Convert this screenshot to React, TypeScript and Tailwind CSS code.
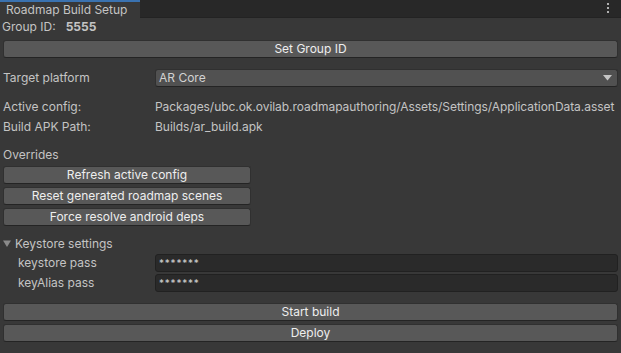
import React from "react";

const font = { fontFamily: "Inter, 'Noto Sans', sans-serif" };

function Btn({ children, className = "" }: { children: React.ReactNode; className?: string }) {
  return (
    <div
      className={
        "h-[18px] flex items-center justify-center rounded-[3px] bg-[#585858] border border-[#303030] border-b-[#242424] text-[#eeeeee] text-[12px] leading-none " +
        className
      }
    >
      {children}
    </div>
  );
}

function Field() {
  return (
    <div className="h-[18px] flex-1 flex items-center rounded-[3px] bg-[#2a2a2a] border border-[#212121] pl-[3px] text-[#d2d2d2] text-[10px] leading-none tracking-[0.8px]">
      *******
    </div>
  );
}

export default function App() {
  return (
    <div className="w-[621px] h-[353px] bg-[#383838] text-[#c4c4c4] text-[12px] flex flex-col overflow-hidden" style={font}>
      {/* Tab bar */}
      <div className="h-[18px] flex bg-[#282828] border-b border-[#232323] relative">
        <div className="w-[140px] h-[18px] bg-[#383838] border-t-2 border-[#3a72b0] flex items-center pl-[6px] text-[12px] text-[#c4c4c4] leading-none">
          Roadmap Build Setup
        </div>
        <div className="absolute right-[12px] top-[3px] flex flex-col gap-[2px]">
          <div className="w-[2px] h-[2px] bg-[#b0b0b0]" />
          <div className="w-[2px] h-[2px] bg-[#b0b0b0]" />
          <div className="w-[2px] h-[2px] bg-[#b0b0b0]" />
        </div>
      </div>

      {/* Group ID */}
      <div className="h-[18px] flex items-center pl-[2px] leading-none">
        <span>Group ID:</span>
        <span className="ml-[10px] font-bold">5555</span>
      </div>

      <div className="px-[3px] mt-[4px]">
        <Btn>Set Group ID</Btn>
      </div>

      {/* Target platform */}
      <div className="mt-[11px] h-[18px] flex items-center pl-[3px] pr-[3px]">
        <div className="w-[152px]">Target platform</div>
        <div className="flex-1 h-[18px] flex items-center justify-between rounded-[3px] bg-[#515151] border border-[#303030] border-b-[#242424] pl-[3px] pr-[5px] text-[#d2d2d2] leading-none">
          <span>AR Core</span>
          <svg width="9" height="6" viewBox="0 0 9 6">
            <path d="M0 0 H9 L4.5 5.5 Z" fill="#c4c4c4" />
          </svg>
        </div>
      </div>

      <div className="mt-[11px] h-[18px] flex items-center pl-[3px] leading-none">
        <div className="w-[152px]">Active config:</div>
        <div className="whitespace-nowrap tracking-[-0.05px]">Packages/ubc.ok.ovilab.roadmapauthoring/Assets/Settings/ApplicationData.asset</div>
      </div>
      <div className="mt-[2px] h-[18px] flex items-center pl-[3px] leading-none">
        <div className="w-[152px]">Build APK Path:</div>
        <div>Builds/ar_build.apk</div>
      </div>

      <div className="mt-[10px] h-[18px] flex items-center pl-[3px] leading-none">Overrides</div>
      <div className="mt-[2px] pl-[3px] flex flex-col gap-[3px] w-[251px]">
        <Btn>Refresh active config</Btn>
        <Btn>Reset generated roadmap scenes</Btn>
        <Btn>Force resolve android deps</Btn>
      </div>

      <div className="mt-[9px] h-[18px] flex items-center pl-[3px] leading-none">
        <svg width="9" height="8" viewBox="0 0 9 8" className="mr-[3px]">
          <path d="M0 0.5 H8 L4 7 Z" fill="#8a8a8a" />
        </svg>
        <span>Keystore settings</span>
      </div>
      <div className="mt-[1px] h-[18px] flex items-center pl-[18px] pr-[3px] leading-none">
        <div className="w-[137px]">keystore pass</div>
        <Field />
      </div>
      <div className="mt-[2px] h-[18px] flex items-center pl-[18px] pr-[3px] leading-none">
        <div className="w-[137px]">keyAlias pass</div>
        <Field />
      </div>

      <div className="mt-[11px] px-[3px] flex flex-col gap-[3px]">
        <Btn>Start build</Btn>
        <Btn>Deploy</Btn>
      </div>
    </div>
  );
}
